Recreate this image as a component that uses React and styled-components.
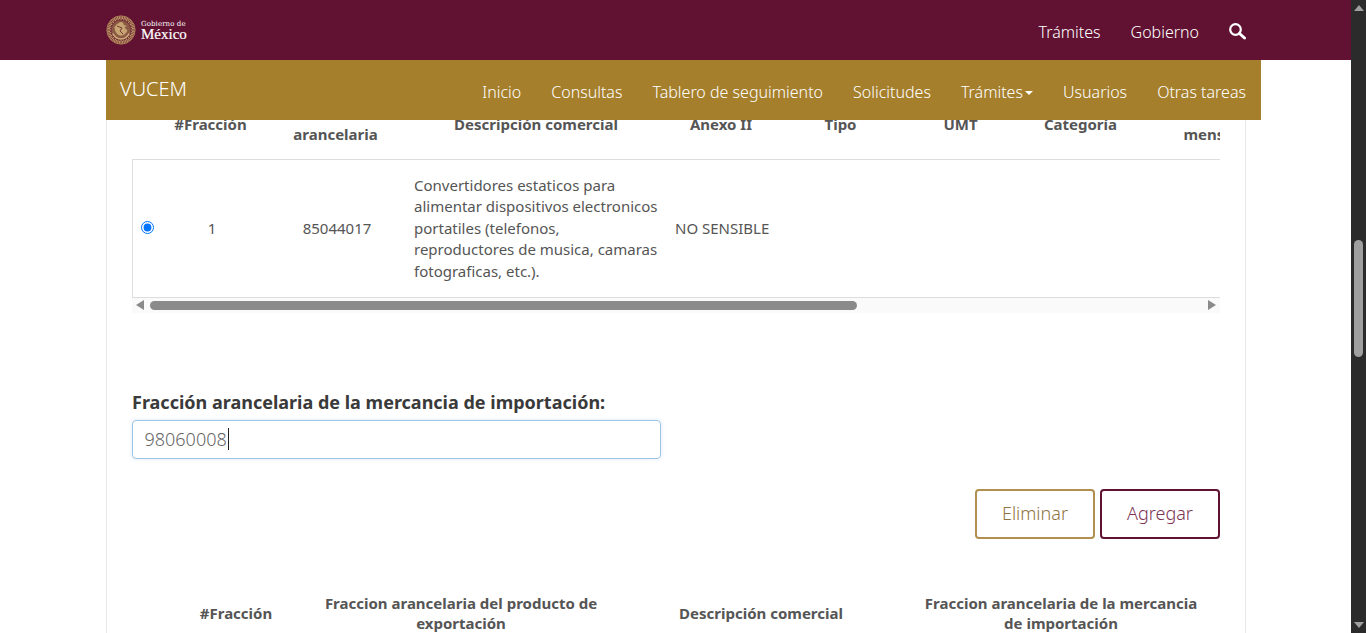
import styled, { createGlobalStyle } from 'styled-components';

const GlobalStyle = createGlobalStyle`
  html, body { margin: 0; padding: 0; height: 100%; overflow: hidden; background: #fff; }
  body { font-family: "Noto Sans", "Open Sans", sans-serif; color: #333; }
  * { box-sizing: border-box; }
`;

const navItems = ['Inicio', 'Consultas', 'Tablero de seguimiento', 'Solicitudes', 'Trámites', 'Usuarios', 'Otras tareas'];

const upperColumns = [
  { width: 24, label: '' },
  { width: 110, label: '#Fracción' },
  { width: 140, label: <>Fracción<br />arancelaria</> },
  { width: 261, label: 'Descripción comercial' },
  { width: 109, label: 'Anexo II' },
  { width: 130, label: 'Tipo' },
  { width: 110, label: 'UMT' },
  { width: 130, label: 'Categoría' },
  { width: 140, label: <>Cantidad máxima<br />mensual</> },
];

const lowerColumns = [
  { width: 38, label: '' },
  { width: 130, label: '#Fracción' },
  { width: 320, label: 'Fraccion arancelaria del producto de exportación' },
  { width: 280, label: 'Descripción comercial' },
  { width: 320, label: 'Fraccion arancelaria de la mercancia de importación' },
];

function Seal() {
  const ticks = Array.from({ length: 48 }, (_, i) => i * 7.5);
  return (
    <svg width="30" height="30" viewBox="0 0 30 30">
      <circle cx="15" cy="15" r="14.2" fill="#6e2a35" stroke="#b18a58" strokeWidth="0.8" />
      {ticks.map((deg, i) => (
        <line key={deg} x1="15" y1="1.2" x2="15" y2={i % 2 ? '4' : '5'} stroke="#c29c69" strokeWidth="1" transform={`rotate(${deg} 15 15)`} />
      ))}
      <circle cx="15" cy="15" r="9.6" fill="#8a5a45" />
      <path d="M8.5 12c2-3 5-5 7.5-5 1 .8 1.600 1.800 1.800 3l3.200 1-2.600 1.200 3.100 3.600c-1.600 3-4.600 5-7 5-3.400-.8-6-4.600-6-8.800z" fill="#c8a472" />
      <path d="M11 11l5 2-2 3 3 3" fill="none" stroke="#6e3a38" strokeWidth="1" />
      <path d="M6.800 18.500c1.800 3.600 4.800 5.500 8.200 5.500s6.400-1.900 8.200-5.500" fill="none" stroke="#d0ad7c" strokeWidth="1.600" />
    </svg>
  );
}

function SearchIcon() {
  return (
    <svg width="17" height="18" viewBox="0 0 17 18">
      <circle cx="6.500" cy="6.500" r="5.300" fill="none" stroke="#fff" strokeWidth="2.200" />
      <line x1="10.500" y1="10.500" x2="15.500" y2="15" stroke="#fff" strokeWidth="3" strokeLinecap="round" />
    </svg>
  );
}

export default function App() {
  return (
    <>
      <GlobalStyle />
      <Page>
        <Main>
          <TopBar>
            <Logo>
              <Seal />
              <LogoText>
                <small>Gobierno de</small>
                <strong>México</strong>
              </LogoText>
            </Logo>
            <TopLinks>
              <a>Trámites</a>
              <a>Gobierno</a>
              <SearchIcon />
            </TopLinks>
          </TopBar>
          <NavBar>
            <Brand>VUCEM</Brand>
            <NavLinks>
              {navItems.map((item) => (
                <NavLink key={item} $caret={item === 'Trámites'}>{item}</NavLink>
              ))}
            </NavLinks>
          </NavBar>
          <Card>
            <TableArea>
              <DataTable>
                <colgroup>
                  {upperColumns.map((c, i) => <col key={i} style={{ width: c.width }} />)}
                </colgroup>
                <thead>
                  <tr>
                    {upperColumns.map((c, i) => <th key={i}>{c.label}</th>)}
                  </tr>
                </thead>
                <tbody>
                  <tr>
                    <RadioCell><input type="radio" name="fraccion" defaultChecked /></RadioCell>
                    <CenterCell>1</CenterCell>
                    <CenterCell>85044017</CenterCell>
                    <td>Convertidores estaticos para alimentar dispositivos electronicos portatiles (telefonos, reproductores de musica, camaras fotograficas, etc.).</td>
                    <NoWrapCell>NO SENSIBLE</NoWrapCell>
                    <td></td>
                    <td></td>
                    <td></td>
                    <td></td>
                  </tr>
                </tbody>
              </DataTable>
            </TableArea>
            <ScrollTrack>
              <Arrow $dir="left" />
              <ScrollThumb />
              <Arrow $dir="right" />
            </ScrollTrack>

            <Field>
              <FieldLabel htmlFor="mercancia">Fracción arancelaria de la mercancia de importación:</FieldLabel>
              <InputBox id="mercancia">
                98060008<Caret />
              </InputBox>
            </Field>

            <Actions>
              <ActionButton $color="#b08f50" $text="#8f7443">Eliminar</ActionButton>
              <ActionButton $color="#611232" $text="#7c3252">Agregar</ActionButton>
            </Actions>

            <LowerTable>
              <colgroup>
                {lowerColumns.map((c, i) => <col key={i} style={{ width: c.width }} />)}
              </colgroup>
              <thead>
                <tr>
                  {lowerColumns.map((c, i) => <th key={i}>{c.label}</th>)}
                </tr>
              </thead>
            </LowerTable>
          </Card>
        </Main>
        <PageScrollbar>
          <PageArrow />
          <PageThumb />
          <PageArrow $down />
        </PageScrollbar>
      </Page>
    </>
  );
}

const Page = styled.div`
  display: flex;
  width: 1366px;
  height: 633px;
  overflow: hidden;
`;

const Main = styled.div`
  width: 1351px;
  height: 633px;
  display: flex;
  flex-direction: column;
  overflow: hidden;
`;

const TopBar = styled.header`
  height: 60px;
  flex: none;
  background: #611232;
  display: flex;
  align-items: center;
  justify-content: space-between;
  padding: 0 105px 0 106px;
  color: #fff;
`;

const Logo = styled.div`
  display: flex;
  align-items: center;
  gap: 5px;
`;

const LogoText = styled.div`
  display: flex;
  flex-direction: column;
  color: #fff;
  small { font-family: "DejaVu Serif", serif; font-size: 7px; line-height: 8px; letter-spacing: 0.1px; }
  strong { font-family: "Liberation Serif", serif; font-size: 15px; line-height: 13px; font-weight: 400; -webkit-text-stroke: 0.2px #fff; }
`;

const TopLinks = styled.nav`
  display: flex;
  align-items: center;
  gap: 30px;
  font-size: 16px;
  font-weight: 300;
  padding-top: 3px;
  a { color: #fff; }
`;

const NavBar = styled.nav`
  height: 60px;
  flex: none;
  width: 1155px;
  margin-left: 106px;
  background: #a57f2c;
  display: flex;
  align-items: center;
  justify-content: space-between;
  padding: 0 15px 0 14px;
  color: #fff;
`;

const Brand = styled.div`
  font-size: 20px;
  font-weight: 300;
  margin-top: -3px;
`;

const NavLinks = styled.div`
  display: flex;
  gap: 30px;
  margin-top: 3px;
`;

const NavLink = styled.a`
  font-size: 16px;
  font-weight: 300;
  color: #fff;
  display: flex;
  align-items: center;
  ${(p) => p.$caret && `
    &::after {
      content: '';
      margin-left: 2px;
      margin-top: 2px;
      border-top: 4px solid #fff;
      border-left: 4px solid transparent;
      border-right: 4px solid transparent;
    }
  `}
`;

const Card = styled.main`
  flex: 1;
  width: 1140px;
  margin-left: 106px;
  padding: 0 25px;
  border-left: 1px solid #e8e8e8;
  border-right: 1px solid #e8e8e8;
  overflow: hidden;
  font-size: 15px;
  line-height: 21.6px;
`;

const TableArea = styled.div`
  width: 1088px;
  margin-top: -16px;
  overflow: hidden;
`;

const DataTable = styled.table`
  width: 1154px;
  table-layout: fixed;
  border-collapse: separate;
  border-spacing: 0;
  color: #555;

  th {
    padding: 0 1px 15px 0;
    font-size: 15px;
    line-height: 20px;
    font-weight: 700;
    color: #555;
    text-align: center;
    white-space: nowrap;
    vertical-align: middle;
  }

  td {
    padding: 14.5px 8px;
    border-top: 1px solid #ddd;
    border-bottom: 1px solid #ddd;
    vertical-align: middle;
  }

  td:first-child {
    border-left: 1px solid #ddd;
  }
`;

const RadioCell = styled.td`
  && { padding: 0 0 0 8px; }
  input { margin: 0 0 4px; width: 13px; height: 13px; accent-color: #0075ff; vertical-align: middle; }
`;

const CenterCell = styled.td`
  text-align: center;
  && { padding-left: 10px; }
`;

const NoWrapCell = styled.td`
  white-space: nowrap;
`;

const ScrollTrack = styled.div`
  width: 1088px;
  height: 15px;
  background: #fafafa;
  display: flex;
  align-items: center;
  padding: 0 4px;
  gap: 6px;
`;

const Arrow = styled.span`
  flex: none;
  border-top: 5px solid transparent;
  border-bottom: 5px solid transparent;
  ${(p) => (p.$dir === 'left' ? 'border-right: 8px solid #8a8a8a;' : 'border-left: 8px solid #8a8a8a; margin-left: auto;')}
`;

const ScrollThumb = styled.span`
  width: 707px;
  height: 9px;
  border-radius: 5px;
  background: #8a8a8a;
`;

const Field = styled.div`
  margin-top: 76px;
  width: 529px;
`;

const FieldLabel = styled.label`
  display: block;
  font-size: 18px;
  line-height: 27px;
  font-weight: 700;
  color: #3a3a3a;
  margin-bottom: 4px;
  white-space: nowrap;
`;

const InputBox = styled.div`
  height: 39px;
  border: 1px solid #9cc4e4;
  border-radius: 4px;
  padding: 0 11.5px;
  display: flex;
  align-items: center;
  font-size: 18px;
  font-weight: 300;
  color: #666;
  box-shadow: 0 0 4px rgba(134, 183, 232, 0.3);
`;

const Caret = styled.span`
  width: 1px;
  height: 22px;
  background: #222;
  margin-left: 1px;
`;

const Actions = styled.div`
  margin-top: 30px;
  width: 1088px;
  display: flex;
  justify-content: flex-end;
  gap: 5px;
`;

const ActionButton = styled.button`
  width: 120px;
  height: 50px;
  background: #fff;
  border: 2px solid ${(p) => p.$color};
  border-radius: 4px;
  color: ${(p) => p.$text};
  font-family: inherit;
  font-size: 18px;
  font-weight: 300;
  padding: 0 0 2px;
`;

const LowerTable = styled.table`
  width: 1088px;
  margin-top: 54px;
  table-layout: fixed;
  border-collapse: separate;
  border-spacing: 0;

  th {
    padding: 0 14px 0 16px;
    font-size: 15px;
    line-height: 20px;
    font-weight: 700;
    color: #555;
    text-align: center;
    vertical-align: middle;
  }
`;

const PageScrollbar = styled.aside`
  width: 15px;
  height: 633px;
  flex: none;
  background: #2b2b2b;
  display: flex;
  flex-direction: column;
  align-items: center;
  padding-top: 5px;
`;

const PageArrow = styled.span`
  border-left: 5px solid transparent;
  border-right: 5px solid transparent;
  ${(p) => (p.$down
    ? 'border-top: 6px solid #9f9f9f; margin-top: auto; margin-bottom: 5px;'
    : 'border-bottom: 6px solid #9f9f9f;')}
`;

const PageThumb = styled.span`
  width: 9px;
  height: 117px;
  margin-top: 229px;
  border-radius: 5px;
  background: #9f9f9f;
`;
